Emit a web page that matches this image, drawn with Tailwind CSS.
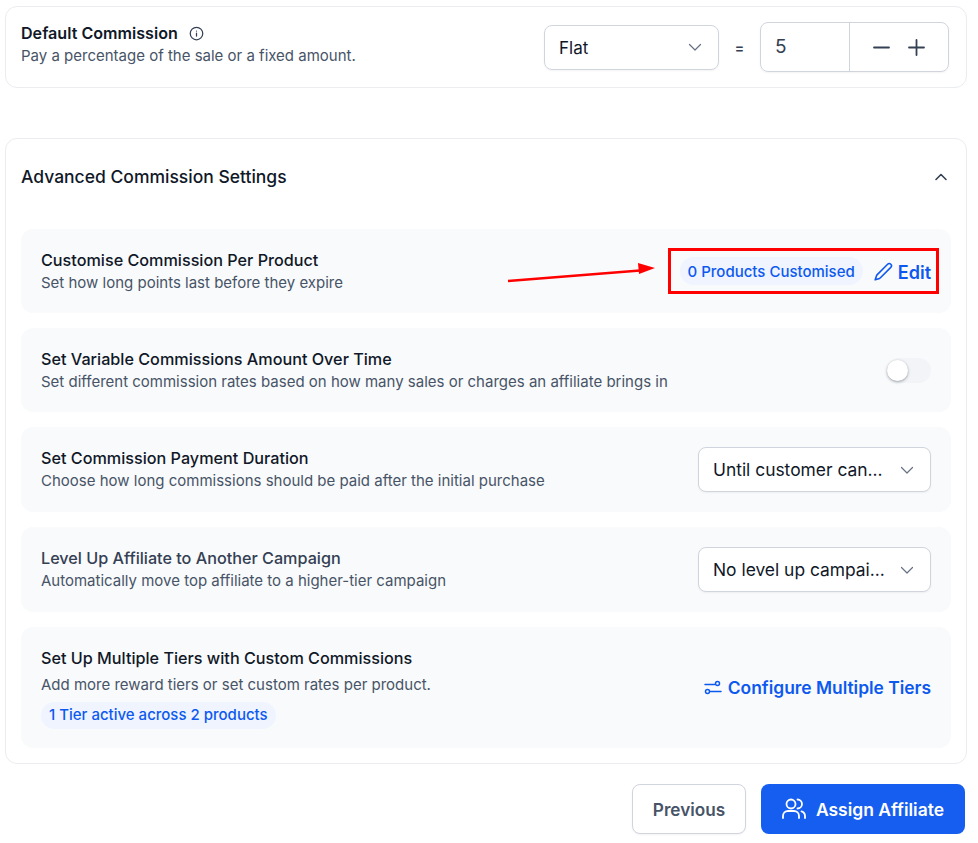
<!DOCTYPE html>
<html lang="en">
<head>
    <meta charset="UTF-8">
    <script src="https://cdn.jsdelivr.net/npm/@tailwindcss/browser@4"></script>
    <title>Commission Settings</title>
</head>
<body class="bg-white font-['Inter',sans-serif] overflow-hidden">
    <div class="relative w-[978px] h-[843px] pt-[6px] pl-[5px]">
        <!-- default commission -->
        <div class="w-[962px] h-[82px] border border-[#eaecf0] rounded-xl flex items-center justify-between pl-[15px] pr-[17px]">
            <div class="pb-[4px]">
                <div class="-mt-[1px] flex items-center gap-[11px] text-[16.100px] leading-[20px] font-semibold text-[#101828]">
                    Default Commission
                    <svg class="w-[15px] h-[15px] text-[#344054]" viewBox="0 0 24 24" fill="none" stroke="currentColor" stroke-width="2" stroke-linecap="round"><circle cx="12" cy="12" r="10"/><path d="M12 16v-4.500M12 8h.01"/></svg>
                </div>
                <div class="text-[15px] leading-[20px] mt-[3px] text-[#475467]">Pay a percentage of the sale or a fixed amount.</div>
            </div>
            <div class="flex items-center">
                <div class="w-[175px] h-[45px] border border-[#d0d5dd] rounded-lg flex items-center justify-between pl-[14px] pr-[15px] text-[17px] text-[#101828] shadow-xs">
                    <span class="pt-[3px]">Flat</span>
                    <svg class="w-[16px] h-[16px] text-[#667085]" viewBox="0 0 16 16" fill="none" stroke="currentColor" stroke-width="1.200" stroke-linecap="round" stroke-linejoin="round"><path d="M2.500 5.500 8 11l5.500-5.500"/></svg>
                </div>
                <span class="w-[41px] pt-[2px] text-center text-sm font-semibold text-[#344054]">=</span>
                <div class="w-[189px] h-[50px] border border-[#d0d5dd] rounded-lg flex items-stretch shadow-xs">
                    <div class="w-[89px] border-r border-[#d0d5dd] flex items-center pl-[14px] text-[19px] text-[#344054]">5</div>
                    <div class="flex-1 flex items-center justify-center gap-[18px] text-[#344054]">
                        <svg class="w-[17px] h-[17px]" viewBox="0 0 17 17" fill="none" stroke="currentColor" stroke-width="1.800" stroke-linecap="round"><path d="M1 8.500h15"/></svg>
                        <svg class="w-[17px] h-[17px]" viewBox="0 0 17 17" fill="none" stroke="currentColor" stroke-width="1.800" stroke-linecap="round"><path d="M1 8.500h15M8.500 1v15"/></svg>
                    </div>
                </div>
            </div>
        </div>

        <!-- advanced settings -->
        <div class="mt-[50px] w-[962px] h-[626px] border border-[#eaecf0] rounded-xl px-[15px]">
            <div class="h-[90px] pb-[14px] flex items-center justify-between pr-[3px] font-medium text-[#101828]">
                <span class="text-[17.500px]">Advanced Commission Settings</span>
                <svg class="w-[14px] h-[14px] text-[#344054]" viewBox="0 0 14 14" fill="none" stroke="currentColor" stroke-width="1.600" stroke-linecap="round" stroke-linejoin="round"><path d="M2 9.500 7 4.500l5 5"/></svg>
            </div>
            <div class="flex flex-col gap-[15px]">
                <div class="h-[84px] bg-[#f9fafb] rounded-xl flex items-center justify-between px-5">
                    <div>
                        <div class="-mt-[1px] text-[16.200px] leading-[22px] font-medium text-[#101828]">Customise Commission Per Product</div>
                        <div class="text-[15px] leading-[20px] mt-[2px] text-[#475467]">Set how long points last before they expire</div>
                    </div>
                    <div class="flex items-center">
                        <span class="h-[28px] flex items-center px-2 pt-[2px] rounded-full bg-[#eff4ff] text-[15px] font-medium text-[#0d59ef]">0 Products Customised</span>
                        <svg class="ml-[11px] w-[19px] h-[19px] text-[#0d59ef]" viewBox="0 0 24 24" fill="none" stroke="currentColor" stroke-width="2" stroke-linecap="round" stroke-linejoin="round"><path d="M21.200 6.800a2.800 2.800 0 0 0-4-4L3.800 16.200a2 2 0 0 0-.5.800L1.500 22.500l5.500-1.800a2 2 0 0 0 .8-.5z"/></svg>
                        <span class="ml-[5px] pt-[2px] text-[18px] font-semibold text-[#0d59ef]">Edit</span>
                    </div>
                </div>
                <div class="h-[84px] bg-[#f9fafb] rounded-xl flex items-center justify-between px-5">
                    <div>
                        <div class="-mt-[1px] text-[16.200px] leading-[22px] font-medium text-[#101828]">Set Variable Commissions Amount Over Time</div>
                        <div class="text-[15px] leading-[20px] mt-[2px] text-[#475467]">Set different commission rates based on how many sales or charges an affiliate brings in</div>
                    </div>
                    <div class="relative w-[44px] h-[25px] rounded-full bg-[#f2f4f7]">
                        <span class="absolute left-0 top-[2px] w-[21px] h-[21px] rounded-full bg-white shadow-[0_1px_3px_rgba(16,24,40,0.4)]"></span>
                    </div>
                </div>
                <div class="h-[85px] bg-[#f9fafb] rounded-xl flex items-center justify-between px-5">
                    <div>
                        <div class="-mt-[1px] text-[16.200px] leading-[22px] font-medium text-[#101828]">Set Commission Payment Duration</div>
                        <div class="text-[15px] leading-[20px] mt-[2px] text-[#475467]">Choose how long commissions should be paid after the initial purchase</div>
                    </div>
                    <div class="w-[233px] h-[45px] bg-white border border-[#d0d5dd] rounded-lg flex items-center justify-between pl-[14px] pr-[15px] text-[17.400px] text-[#101828] shadow-xs">
                        <span class="pt-[2px]">Until customer can...</span>
                        <svg class="w-[16px] h-[16px] text-[#667085]" viewBox="0 0 16 16" fill="none" stroke="currentColor" stroke-width="1.200" stroke-linecap="round" stroke-linejoin="round"><path d="M2.500 5.500 8 11l5.500-5.500"/></svg>
                    </div>
                </div>
                <div class="h-[85px] bg-[#f9fafb] rounded-xl flex items-center justify-between px-5">
                    <div>
                        <div class="-mt-[1px] text-[16.200px] leading-[22px] font-medium text-[#344054]">Level Up Affiliate to Another Campaign</div>
                        <div class="text-[15px] leading-[20px] mt-[2px] text-[#475467]">Automatically move top affiliate to a higher-tier campaign</div>
                    </div>
                    <div class="w-[233px] h-[45px] bg-white border border-[#d0d5dd] rounded-lg flex items-center justify-between pl-[14px] pr-[15px] text-[17.400px] text-[#101828] shadow-xs">
                        <span class="pt-[2px]">No level up campai...</span>
                        <svg class="w-[16px] h-[16px] text-[#667085]" viewBox="0 0 16 16" fill="none" stroke="currentColor" stroke-width="1.200" stroke-linecap="round" stroke-linejoin="round"><path d="M2.500 5.500 8 11l5.500-5.500"/></svg>
                    </div>
                </div>
                <div class="h-[121px] bg-[#f9fafb] rounded-xl flex items-center justify-between px-5">
                    <div>
                        <div class="text-[16.200px] leading-[22px] font-medium text-[#101828]">Set Up Multiple Tiers with Custom Commissions</div>
                        <div class="text-[15px] leading-[20px] mt-[6px] text-[#475467]">Add more reward tiers or set custom rates per product.</div>
                        <span class="mt-[7px] inline-flex h-[27px] items-center px-2 rounded-full bg-[#eff4ff] text-[15px] font-medium text-[#0d59ef]">1 Tier active across 2 products</span>
                    </div>
                    <div class="pt-[2px] flex items-center gap-[6px] text-[17.400px] font-semibold text-[#0d59ef]">
                        <svg class="w-[18px] h-[18px]" viewBox="0 0 18 18" fill="none" stroke="currentColor" stroke-width="1.500" stroke-linecap="round"><circle cx="13.500" cy="4.500" r="2"/><circle cx="3.500" cy="12.500" r="2"/><path d="M1 5.500h9.500M6.500 12.500H17"/></svg>
                        Configure Multiple Tiers
                    </div>
                </div>
            </div>
        </div>

        <!-- footer buttons -->
        <div class="mt-[20px] w-[960px] flex justify-end gap-[15px]">
            <button class="w-[114px] h-[50px] pt-[1px] bg-white border border-[#d0d5dd] rounded-lg text-[17.200px] font-semibold text-[#475467] shadow-xs">Previous</button>
            <button class="w-[204px] h-[50px] pt-[3px] bg-[#155eef] rounded-lg text-[17.500px] font-semibold text-white flex items-center justify-center gap-[10px]">
                <svg class="w-[24px] h-[24px] -mt-[3px]" viewBox="0 0 24 24" fill="none" stroke="currentColor" stroke-width="1.800" stroke-linecap="round" stroke-linejoin="round"><path d="M17 21v-2a5 5 0 0 0-5-5H6a5 5 0 0 0-5 5v2"/><circle cx="9" cy="7" r="4.500"/><path d="M23 21v-2a5 5 0 0 0-3.500-4.700M15.500 2.500a4.500 4.500 0 0 1 0 9"/></svg>
                Assign Affiliate
            </button>
        </div>

        <!-- red annotation -->
        <div class="absolute left-[668px] top-[248px] w-[271px] h-[46px] border-[3px] border-[#ff0000]"></div>
        <svg class="absolute left-[500px] top-[255px] w-[160px] h-[35px]" viewBox="0 0 160 35" fill="none"><path d="M8 26 140 15.500" stroke="#ff0000" stroke-width="2.500"/><path d="M138 8 155 13 139 19z" fill="#ff0000"/></svg>
    </div>
</body>
</html>
